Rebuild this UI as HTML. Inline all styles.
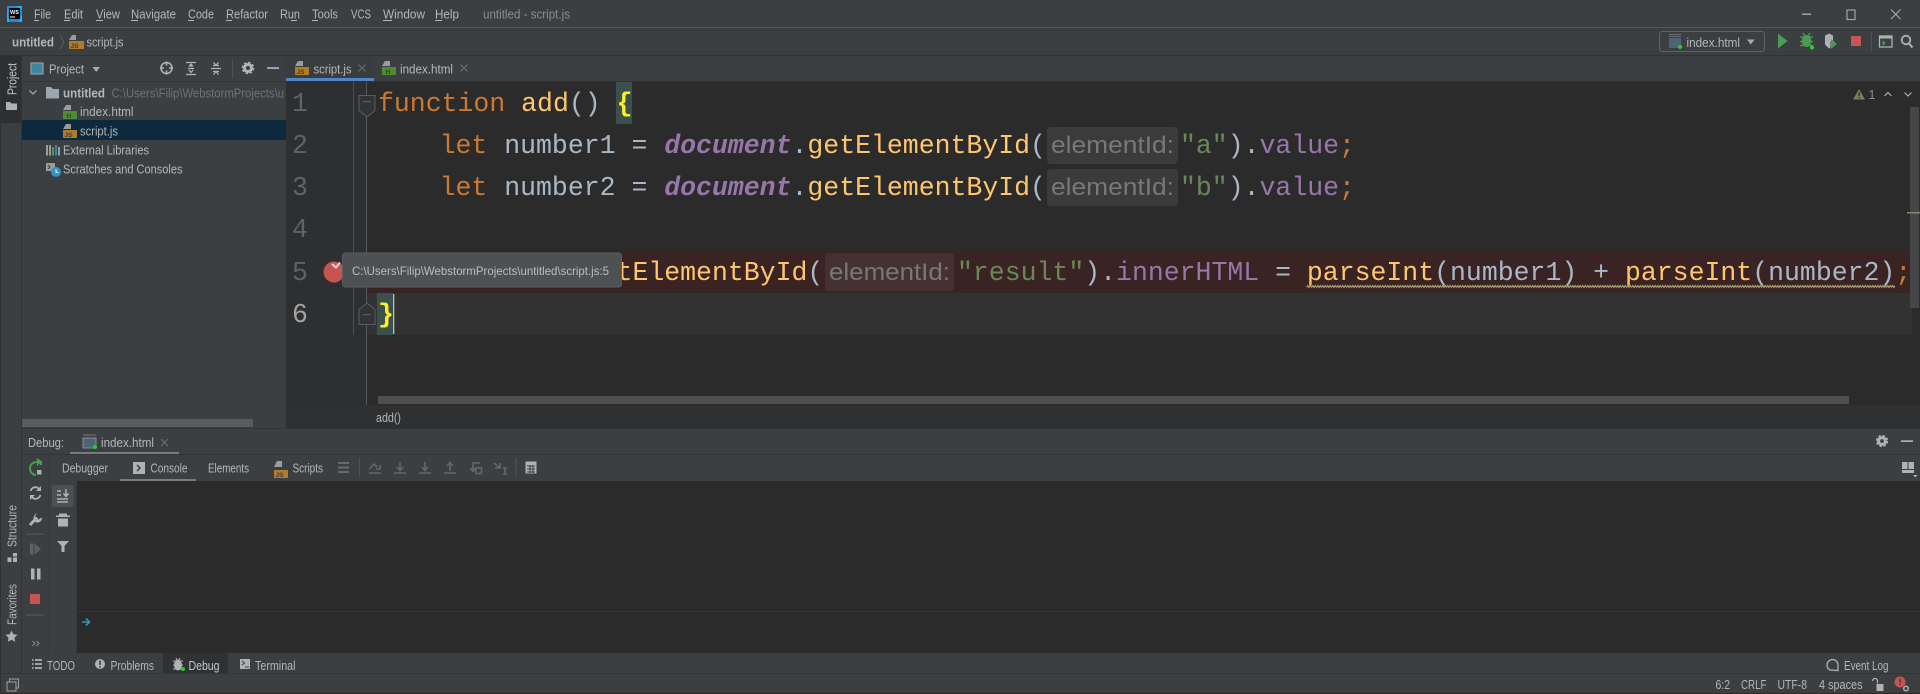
<!DOCTYPE html>
<html><head><meta charset="utf-8"><title>untitled - script.js</title>
<style>
html,body{margin:0;padding:0;background:#3c3f41;width:1920px;height:694px;overflow:hidden}
svg{display:block;filter:blur(.35px)}
text{font-family:"Liberation Sans",sans-serif;font-size:12.5px;fill:#b4b6b8;white-space:pre}
.d{fill:#8a8d8f}
.c{font-family:"Liberation Mono",monospace;font-size:26.5px}
.k{fill:#cc7832}.f{fill:#ffc66d}.v{fill:#a9b7c6}.p{fill:#9876aa}.s{fill:#6a8759}
.b{font-weight:bold;font-style:italic}
.n{fill:#606366}
.h{font-size:24px;fill:#787878}
.i{fill:none;stroke:#afb1b3;stroke-width:1.6}
.m{fill:#6e7072;stroke:#6e7072}
</style></head><body>
<svg width="1920" height="694" viewBox="0 0 1920 694" xmlns="http://www.w3.org/2000/svg">
<defs><pattern id="sq" x="1306.500" y="284" width="5" height="5" patternUnits="userSpaceOnUse"><path d="M0 3.500L1.250 1.500 2.500 3.500 3.750 1.500 5 3.500" fill="none" stroke="#b0a878" stroke-width="1"/></pattern></defs>
<!-- base -->
<rect width="1920" height="694" fill="#3c3f41"/>
<rect x="0" y="27" width="1920" height="1" fill="#555759"/>
<rect x="0" y="55" width="1920" height="1" fill="#323232"/>
<!-- logo -->
<rect x="7" y="6" width="15" height="16" fill="#07c3f2"/><path d="M7 6h8l7 3v5l-3 8H9z" fill="#1d8ce0"/><rect x="9" y="8" width="11" height="11" fill="#000"/><text x="10" y="14" style="font-size:5.5px;font-weight:bold;fill:#fff">WS</text><rect x="10" y="16.5" width="5" height="1" fill="#fff"/>
<!-- menu -->
<text x="34" y="18.500" textLength="17" lengthAdjust="spacingAndGlyphs">File</text>
<text x="64" y="18.500" textLength="19" lengthAdjust="spacingAndGlyphs">Edit</text>
<text x="96" y="18.500" textLength="24" lengthAdjust="spacingAndGlyphs">View</text>
<text x="131" y="18.500" textLength="45" lengthAdjust="spacingAndGlyphs">Navigate</text>
<text x="188" y="18.500" textLength="26" lengthAdjust="spacingAndGlyphs">Code</text>
<text x="226" y="18.500" textLength="42" lengthAdjust="spacingAndGlyphs">Refactor</text>
<text x="280" y="18.500" textLength="20" lengthAdjust="spacingAndGlyphs">Run</text>
<text x="312" y="18.500" textLength="26" lengthAdjust="spacingAndGlyphs">Tools</text>
<text x="351" y="18.500" textLength="20" lengthAdjust="spacingAndGlyphs">VCS</text>
<text x="383" y="18.500" textLength="42" lengthAdjust="spacingAndGlyphs">Window</text>
<text x="435" y="18.500" textLength="24" lengthAdjust="spacingAndGlyphs">Help</text>
<text x="483" y="18.500" textLength="87" lengthAdjust="spacingAndGlyphs" class="d">untitled - script.js</text>
<g fill="#b4b6b8"><rect x="34" y="20" width="5" height="1"/><rect x="64" y="20" width="6" height="1"/><rect x="96" y="20" width="7" height="1"/><rect x="131" y="20" width="7" height="1"/><rect x="188" y="20" width="6" height="1"/><rect x="226" y="20" width="6" height="1"/><rect x="291" y="20" width="6" height="1"/><rect x="312" y="20" width="6" height="1"/><rect x="383" y="20" width="9" height="1"/><rect x="435" y="20" width="7" height="1"/></g>
<!-- window controls -->
<rect x="1802" y="13.5" width="9" height="1.4" fill="#a8aaac"/>
<rect x="1847" y="10" width="8" height="9.5" fill="none" stroke="#a8aaac" stroke-width="1.1"/>
<path d="M1891 9.5l9.5 9.5M1900.500 9.500l-9.500 9.500" stroke="#a8aaac" stroke-width="1.1"/>
<!-- navbar -->
<text x="12" y="46.500" textLength="42" lengthAdjust="spacingAndGlyphs" style="font-weight:bold">untitled</text>
<path d="M60 35l4 7-4 7" fill="none" stroke="#5a5d5f"/>
<path d="M72 35h4v5h-7z" fill="#9a9c9e"/><rect x="69" y="41" width="15" height="8" fill="#b07c2a"/><text x="70.500" y="48" style="font-size:6.500px;font-weight:bold;fill:#3c3f41">JS</text>
<text x="86.500" y="46.500" textLength="37" lengthAdjust="spacingAndGlyphs">script.js</text>
<!-- run config -->
<rect x="1659.500" y="31.500" width="105" height="20" rx="3" fill="none" stroke="#5e6163"/>
<rect x="1669" y="38" width="12" height="10" fill="#4d6474"/><path d="M1669 34.500h12M1669 36.500h12" stroke="#6e7072"/><circle cx="1680" cy="47" r="2" fill="#1ed81e"/>
<text x="1686.500" y="47" textLength="53.500" lengthAdjust="spacingAndGlyphs">index.html</text>
<path d="M1747 39.500h7.500l-3.750 5z" fill="#a8aaac"/>
<path d="M1778 33.500l9.500 7.500-9.500 7.500z" fill="#499c54"/>
<ellipse cx="1806.500" cy="41" rx="4.800" ry="6" fill="#499c54"/><path d="M1800 37h13M1800 41.500h13M1800 45.500h13M1803 33l2 3M1810 33l-2 3" stroke="#499c54" stroke-width="1.300"/><circle cx="1812" cy="47.500" r="2" fill="#1ed81e"/>
<path d="M1825 35.500l4-2 4 2v5l-2.500 1v6l-1.500 1-4-4z" fill="#afb1b3"/><path d="M1831 39l6 5-6 5z" fill="#499c54"/>
<rect x="1851" y="36" width="10" height="10" fill="#c75450"/>
<rect x="1871" y="32" width="1" height="19" fill="#515456"/>
<rect x="1879.500" y="36" width="12.500" height="11" fill="none" stroke="#afb1b3" stroke-width="1.300"/><rect x="1879.500" y="36" width="12.500" height="2.500" fill="#afb1b3"/><path d="M1882.500 40.500l3.500 2.500-3.500 2.500z" fill="#499c54"/>
<circle cx="1906" cy="40" r="4.300" class="i" style="stroke-width:1.800"/><path d="M1909 43.500l3.500 4" class="i" style="stroke-width:2"/>
<!-- left stripe -->
<rect x="0" y="56" width="21" height="638" fill="#3c3f41"/>
<rect x="0" y="56" width="1" height="638" fill="#2f3133"/>
<rect x="1" y="56" width="20" height="67" fill="#2d2f30"/>
<rect x="21" y="56" width="1" height="617" fill="#323436"/>
<text transform="translate(16.500,95) rotate(-90)" textLength="32" lengthAdjust="spacingAndGlyphs" style="fill:#c4c6c8">Project</text>
<path d="M6 102h4l1.500 1.500H17V110H6z" fill="#afb1b3"/>
<text transform="translate(16.500,547) rotate(-90)" textLength="42" lengthAdjust="spacingAndGlyphs">Structure</text>
<path d="M7.500 557.500h4v4.500h-4zM13 557.500h4v4.500h-4zM13 553h4v3.500h-4z" fill="#afb1b3"/>
<text transform="translate(16.500,625) rotate(-90)" textLength="41" lengthAdjust="spacingAndGlyphs">Favorites</text>
<path d="M11.500 630.500l1.800 3.700 4.200.6-3 2.900.7 4.100-3.700-2-3.700 2 .7-4.100-3-2.900 4.200-.6z" fill="#afb1b3"/>
<!-- project panel -->
<rect x="22" y="56" width="264" height="25" fill="#3c3f41"/>
<rect x="22" y="81" width="264" height="1" fill="#323436"/>
<rect x="31" y="63" width="12" height="11" fill="#3e86a0" stroke="#9a9c9e" stroke-width="1.200"/>
<text x="49" y="73.500" textLength="35" lengthAdjust="spacingAndGlyphs">Project</text>
<path d="M92.500 67h7.500l-3.750 5z" fill="#a8aaac"/>
<circle cx="166.500" cy="68" r="5.500" class="i"/><path d="M166.500 61.500v4M166.500 70.500v4M160 68h4M169 68h4" class="i"/>
<path d="M186 62.500h10M186 74.500h10M191 64v3M189 66.500l2-2.500 2 2.500M189 70l2 2.500 2-2.500M188 68.500h6" class="i" style="stroke-width:1.300"/>
<path d="M211 68.500h10M213.500 62.500l2.500 3 2.500-3M213.500 74.500l2.500-3 2.500 3" class="i" style="stroke-width:1.300"/><path d="M213 65.500h6M213 71.500h6" stroke="#afb1b3" stroke-width="1.300"/>
<rect x="232" y="59" width="1" height="19" fill="#515456"/>
<circle cx="248" cy="68" r="3.500" fill="none" stroke="#afb1b3" stroke-width="3"/><circle cx="248" cy="68" r="5.500" fill="none" stroke="#afb1b3" stroke-width="1.500" stroke-dasharray="2.500 1.800"/>
<rect x="267" y="67.200" width="12" height="1.700" fill="#afb1b3"/>
<rect x="22" y="120" width="264" height="20" fill="#0d293e"/>
<path d="M29.500 90.500l3.500 3.500 3.500-3.500" fill="none" stroke="#a0a2a4" stroke-width="1.300"/>
<path d="M46 87h5l2 2h6v9.500H46z" fill="#9aa7b0"/>
<text x="63" y="97.500" textLength="42" lengthAdjust="spacingAndGlyphs" style="font-weight:bold">untitled</text>
<text x="111.500" y="97.500" textLength="172.500" lengthAdjust="spacingAndGlyphs" style="fill:#6f7274">C:\Users\Filip\WebstormProjects\u</text>
<path d="M66 105h5v5h-8z" fill="#9a9c9e"/><rect x="63" y="111" width="14" height="8" fill="#4f8a34"/><text x="66.500" y="118" style="font-size:6.500px;font-weight:bold;fill:#2d4a20">H</text>
<text x="80" y="116" textLength="53.500" lengthAdjust="spacingAndGlyphs">index.html</text>
<path d="M66 124h5v5h-8z" fill="#9a9c9e"/><rect x="63" y="130" width="14" height="8" fill="#b07c2a"/><text x="64.500" y="137" style="font-size:6.500px;font-weight:bold;fill:#3c3f41">JS</text>
<text x="80" y="135.500" textLength="38" lengthAdjust="spacingAndGlyphs">script.js</text>
<g stroke-width="2"><path d="M47 145v10.500" stroke="#9a9c9e"/><path d="M50 145v10.500" stroke="#9a9c9e"/><path d="M53 147v8.500" stroke="#4f9a44"/><path d="M56 145v10.500" stroke="#3e86a0"/><path d="M59 147v8.500" stroke="#9a9c9e"/></g>
<text x="63" y="154.500" textLength="86" lengthAdjust="spacingAndGlyphs">External Libraries</text>
<rect x="46" y="163" width="9" height="8" fill="#9a9c9e"/><path d="M48 165l2 2-2 2" fill="none" stroke="#3c3f41"/><circle cx="56" cy="172" r="5" fill="#3592c4"/><path d="M56 169v3.300h2.500" fill="none" stroke="#fff" stroke-width=".9"/>
<text x="63" y="173.500" textLength="119.500" lengthAdjust="spacingAndGlyphs">Scratches and Consoles</text>
<rect x="22" y="419" width="231" height="8" fill="#595b5d"/>
<!-- tabs -->
<rect x="286" y="56" width="1634" height="25" fill="#3c3f41"/>
<rect x="286" y="56" width="88" height="25" fill="#3a3d3f"/>
<rect x="286" y="78" width="88" height="3" fill="#4a88c7"/>
<rect x="286" y="81" width="1634" height="1" fill="#323232"/>
<path d="M298 61h5v5h-8z" fill="#9a9c9e"/><rect x="295" y="67" width="14" height="8" fill="#b07c2a"/><text x="296.500" y="74" style="font-size:6.500px;font-weight:bold;fill:#3c3f41">JS</text>
<text x="313.500" y="73.500" textLength="38" lengthAdjust="spacingAndGlyphs">script.js</text>
<path d="M358.500 64.500l7 7M365.500 64.500l-7 7" stroke="#6e7072"/>
<path d="M385 61h5v5h-8z" fill="#9a9c9e"/><rect x="382" y="67" width="14" height="8" fill="#4f8a34"/><text x="385.500" y="74" style="font-size:6.500px;font-weight:bold;fill:#2d4a20">H</text>
<text x="400" y="73.500" textLength="53" lengthAdjust="spacingAndGlyphs">index.html</text>
<path d="M460.500 64.500l7 7M467.500 64.500l-7 7" stroke="#6e7072"/>
<!-- editor -->
<rect x="286" y="82" width="1634" height="323" fill="#2b2b2b"/>
<rect x="286" y="82" width="80" height="323" fill="#2e2f30"/>
<rect x="366" y="293" width="1546" height="42" fill="#323232"/>
<rect x="366" y="251" width="1546" height="42" fill="#3a2323"/>
<rect x="353" y="82" width="1" height="253" fill="#41564f"/>
<rect x="366" y="82" width="1" height="323" fill="#555759"/>
<rect x="1910" y="107" width="9" height="201" fill="#444648"/>
<rect x="1907" y="212" width="13" height="1.500" fill="#8c8567"/>
<!-- brace bg -->
<rect x="616" y="82" width="16" height="42" fill="#3b514d"/>
<rect x="377" y="293" width="16" height="42" fill="#3b514d"/>
<!-- gutter numbers -->
<text class="c n" x="292" y="111">1</text>
<text class="c n" x="292" y="153">2</text>
<text class="c n" x="292" y="195">3</text>
<text class="c n" x="292" y="237">4</text>
<text class="c n" x="292" y="280">5</text>
<text class="c" x="292" y="322" style="fill:#a4a3a3">6</text>
<!-- fold -->
<path d="M359 95.500h16v15l-8 6.500-8-6.500z" fill="#313335" stroke="#5a5d5f"/><rect x="363" y="101" width="8" height="1.300" fill="#5a5d5f"/>
<path d="M359 324.500h16v-15l-8-6.500-8 6.500z" fill="#313335" stroke="#5a5d5f"/><rect x="363" y="314" width="8" height="1.300" fill="#5a5d5f"/>
<!-- code -->
<text class="c" x="378" y="111"><tspan class="k">function</tspan> <tspan class="f">add</tspan><tspan class="v">()</tspan> <tspan style="fill:#ffef28;font-weight:bold">{</tspan></text>
<text class="c" x="439.600" y="153"><tspan class="k">let</tspan> <tspan class="v" dx="1">number1 =</tspan> <tspan class="p b" dx="1">document</tspan><tspan class="v">.</tspan><tspan class="f">getElementById</tspan><tspan class="v">(</tspan></text>
<rect x="1047" y="127" width="131" height="37" rx="4" fill="#3b3b3b"/>
<text class="h" x="1051" y="153" textLength="123" lengthAdjust="spacingAndGlyphs">elementId:</text>
<text class="c" x="1180" y="153"><tspan class="s">"a"</tspan><tspan class="v">).</tspan><tspan class="p">value</tspan><tspan class="k">;</tspan></text>
<text class="c" x="439.600" y="195"><tspan class="k">let</tspan> <tspan class="v" dx="1">number2 =</tspan> <tspan class="p b" dx="1">document</tspan><tspan class="v">.</tspan><tspan class="f">getElementById</tspan><tspan class="v">(</tspan></text>
<rect x="1047" y="169" width="131" height="37" rx="4" fill="#3b3b3b"/>
<text class="h" x="1051" y="195" textLength="123" lengthAdjust="spacingAndGlyphs">elementId:</text>
<text class="c" x="1180" y="195"><tspan class="s">"b"</tspan><tspan class="v">).</tspan><tspan class="p">value</tspan><tspan class="k">;</tspan></text>
<text class="c" x="441.600" y="280"><tspan class="p b">document</tspan><tspan class="v">.</tspan><tspan class="f">getElementById</tspan><tspan class="v">(</tspan></text>
<rect x="825" y="253" width="129" height="38" rx="4" fill="#453131"/>
<text class="h" x="829" y="280" textLength="121" lengthAdjust="spacingAndGlyphs">elementId:</text>
<text class="c" x="957" y="280"><tspan class="s">"result"</tspan><tspan class="v">).</tspan><tspan class="p">innerHTML</tspan> <tspan class="v">=</tspan> <tspan class="f">parseInt</tspan><tspan class="v">(number1) +</tspan> <tspan class="f">parseInt</tspan><tspan class="v">(number2)</tspan><tspan class="k">;</tspan></text>
<rect x="1306.500" y="284" width="588.500" height="5" fill="url(#sq)"/>
<text class="c" x="378" y="322" style="fill:#ffef28;font-weight:bold">}</text>
<rect x="393" y="294" width="1.300" height="40" fill="#bbbbbb"/>
<!-- breakpoint + tooltip -->
<circle cx="334" cy="272" r="10.500" fill="#c75450"/><path d="M332 264l4 3.500 4-5" fill="none" stroke="#d8d8d8" stroke-width="2"/>
<rect x="342.500" y="253" width="279" height="34" rx="3" fill="#4e5153" stroke="#5a5d5f"/>
<text x="352" y="275" textLength="257" lengthAdjust="spacingAndGlyphs" style="fill:#bbbdbf;font-size:12px">C:\Users\Filip\WebstormProjects\untitled\script.js:5</text>
<!-- warning -->
<path d="M1859 89l6 10.500h-12z" fill="#807a5e"/><rect x="1858.400" y="92.500" width="1.300" height="3.500" fill="#2b2b2b"/><rect x="1858.400" y="97" width="1.300" height="1.300" fill="#2b2b2b"/>
<text x="1868.500" y="99" style="fill:#8a8d8f">1</text>
<path d="M1884.500 96l3.500-3.500 3.500 3.500M1904.500 92.500l3.500 3.500 3.500-3.500" fill="none" stroke="#a8aaac" stroke-width="1.200"/>
<!-- h scrollbar -->
<rect x="378" y="396" width="1471" height="8" fill="#4f4f4f"/>
<!-- breadcrumbs -->
<rect x="286" y="405" width="1634" height="24" fill="#2f3031"/>
<text x="376" y="422" textLength="25" lengthAdjust="spacingAndGlyphs">add()</text>
<rect x="21" y="428" width="1899" height="1" fill="#323436"/>
<!-- debug header -->
<text x="28" y="447" textLength="36" lengthAdjust="spacingAndGlyphs">Debug:</text>
<path d="M83 435h13" stroke="#7a7c7e"/><rect x="83" y="438" width="13" height="10" fill="#4d6474" stroke="#8a8d8f"/><circle cx="95" cy="447" r="2" fill="#1ed81e"/>
<text x="101" y="447" textLength="53" lengthAdjust="spacingAndGlyphs">index.html</text>
<path d="M161 439l7 7M168 439l-7 7" stroke="#6e7072"/>
<rect x="70" y="452" width="109" height="2" fill="#787c7e"/>
<rect x="21" y="454" width="1899" height="1" fill="#323436"/>
<circle cx="1882" cy="441" r="3.400" fill="none" stroke="#afb1b3" stroke-width="3"/><circle cx="1882" cy="441" r="5.400" fill="none" stroke="#afb1b3" stroke-width="1.500" stroke-dasharray="2.500 1.800"/>
<rect x="1901" y="440.300" width="12" height="1.700" fill="#afb1b3"/>
<!-- debug toolbar -->
<rect x="21" y="455" width="1" height="218" fill="#323436"/>
<rect x="48.500" y="455" width="1" height="198" fill="#323436"/>
<text x="62" y="472.500" textLength="46" lengthAdjust="spacingAndGlyphs">Debugger</text>
<rect x="133" y="462" width="12" height="12" fill="#afb1b3"/><path d="M137 465l3 3-3 3" fill="none" stroke="#3c3f41" stroke-width="1.500"/>
<text x="150.500" y="472.500" textLength="37" lengthAdjust="spacingAndGlyphs">Console</text>
<rect x="120" y="479" width="76" height="2" fill="#787c7e"/>
<text x="208" y="472.500" textLength="41" lengthAdjust="spacingAndGlyphs">Elements</text>
<path d="M277 461h5v6h-8z" fill="#9a9c9e"/><rect x="274" y="470" width="14" height="8" fill="#b07c2a"/><text x="275.500" y="477" style="font-size:6.500px;font-weight:bold;fill:#3c3f41">JS</text>
<text x="292.500" y="472.500" textLength="30.500" lengthAdjust="spacingAndGlyphs">Scripts</text>
<path d="M338 463h11M338 467.500h11M338 472h11" stroke="#686a6c" stroke-width="2"/>
<rect x="359" y="458" width="1" height="19" fill="#515456"/>
<g fill="none" stroke="#646668" stroke-width="1.600">
<path d="M369 473h12M369.500 469l4.500-5 3 3M376 469h4v-4"/>
<path d="M394 473h12M400 462v8M397 467l3 3.500 3-3.500"/>
<path d="M419 473h12M425 462v8M422 467l3 3.500 3-3.500"/>
<path d="M444 473h12M450 471v-8M447 466l3-3.500 3 3.500"/>
<path d="M480 463h-7v8M470 468l3 3.500 3-3.500"/><rect x="476" y="468" width="5.500" height="5.500"/>
<path d="M494 463l6 5M495 468h5v-5M503 468h4M505 468v6M503 474h4"/>
</g>
<rect x="515.500" y="458" width="1" height="19" fill="#515456"/>
<rect x="525.500" y="461.500" width="11" height="12" fill="#afb1b3"/><path d="M527 466h8M527 469h8M527 472h8M530 465v8M533 465v8" stroke="#3c3f41"/>
<g fill="#afb1b3"><rect x="1902" y="462" width="5.500" height="7"/><rect x="1908.500" y="462" width="5.500" height="7"/><rect x="1902" y="470" width="12" height="3"/><path d="M1913 475h4.500l-2.250 2.500z"/></g>
<!-- debug sidebars -->
<rect x="49" y="481" width="28" height="172" fill="#3c3f41"/>
<rect x="76.500" y="481" width="1" height="172" fill="#323436"/>
<path d="M41 465v-3l-4-3M41 462h-4c-4 0-7 2.500-7 6.500s3 6.500 6 6.500" fill="none" stroke="#499c54" stroke-width="2"/><path d="M37 458l4.500 4-4.500 4z" fill="#499c54"/><rect x="37" y="470" width="4.500" height="4.500" fill="#afb1b3"/>
<path d="M30.500 491c1-3 4-4.500 6.500-3.500l2 1M40.500 495c-1 3-4 4.500-6.500 3.500l-2-1" fill="none" stroke="#afb1b3" stroke-width="1.800"/><path d="M41 486v5h-5zM30 500v-5h5z" fill="#afb1b3"/>
<path d="M30 525l7-7.500" stroke="#afb1b3" stroke-width="3"/><path d="M37 513l-2 3 .5 3 3 .5 3-2 .5 1c-.5 3-3 4.500-6 4l-2.500-3c0-3 1-5.500 3.500-6.500z" fill="#afb1b3"/>
<rect x="26" y="533.500" width="18" height="1.300" fill="#515456"/>
<rect x="30" y="543.500" width="3.500" height="11" fill="#5e6062"/><path d="M34.500 543.500l6.500 5.500-6.500 5.500z" fill="#5e6062"/>
<rect x="31" y="568.500" width="3.500" height="11" fill="#afb1b3"/><rect x="37" y="568.500" width="3.500" height="11" fill="#afb1b3"/>
<rect x="30" y="594" width="10" height="10" fill="#c75450"/>
<rect x="26" y="614.500" width="18" height="1.300" fill="#515456"/>
<path d="M32.500 641l2.500 2.500-2.500 2.500M36.500 641l2.500 2.500-2.500 2.500" fill="none" stroke="#8a8d8f"/>
<rect x="52" y="485" width="21.500" height="22" rx="2" fill="#4c5052"/>
<path d="M57 491h4M57 495h4M57 499h11M66 489v7M63.500 493.500l2.500 3 2.500-3M57 502h11" fill="none" stroke="#afb1b3" stroke-width="1.500"/>
<path d="M59 513.500h8v2h3v1.500H56v-1.500h3zM58 518.500h10v8H58z" fill="#afb1b3"/>
<path d="M57 541h12l-4.500 5v6h-3v-6z" fill="#afb1b3"/>
<!-- console -->
<rect x="77" y="481" width="1843" height="172" fill="#2b2b2b"/>
<rect x="77" y="611" width="1843" height="1" fill="#353535"/>
<path d="M82 622h7M86 618.500l3.500 3.500-3.500 3.500" fill="none" stroke="#3592c4" stroke-width="1.600"/>
<!-- bottom tabs -->
<rect x="22" y="653" width="1898" height="20" fill="#3c3f41"/>
<rect x="0" y="673" width="1920" height="1" fill="#323436"/>
<rect x="163" y="653" width="65" height="20" fill="#2f3133"/>
<path d="M35 660h7M35 664h7M35 668h7M32 660h1.500M32 664h1.500M32 668h1.500" stroke="#afb1b3" stroke-width="1.800"/>
<text x="47" y="670" textLength="28" lengthAdjust="spacingAndGlyphs">TODO</text>
<circle cx="100" cy="664" r="5" fill="#afb1b3"/><rect x="99.200" y="660.500" width="1.600" height="4.500" fill="#3c3f41"/><rect x="99.200" y="666" width="1.600" height="1.600" fill="#3c3f41"/>
<text x="110.500" y="670" textLength="43.500" lengthAdjust="spacingAndGlyphs">Problems</text>
<ellipse cx="178" cy="665" rx="4" ry="5.500" fill="#afb1b3"/><path d="M173 661h10M173 665h10M173 669h10M176 658l1 2M180 658l-1 2" stroke="#afb1b3"/><circle cx="183" cy="669" r="2" fill="#1ed81e"/>
<text x="188.500" y="670" textLength="31" lengthAdjust="spacingAndGlyphs" style="fill:#c4c6c8">Debug</text>
<rect x="240" y="659" width="10" height="10" fill="#afb1b3"/><path d="M242 661l2.500 2-2.500 2M245 667h4" fill="none" stroke="#3c3f41"/>
<text x="255" y="670" textLength="40.500" lengthAdjust="spacingAndGlyphs">Terminal</text>
<path d="M1830 670c-2-1-3-3-3-5 0-3 2.500-5.500 5.500-5.500s5.500 2.500 5.500 5.500v5.500z" fill="none" stroke="#afb1b3" stroke-width="1.300"/>
<text x="1844" y="670" textLength="44.500" lengthAdjust="spacingAndGlyphs">Event Log</text>
<!-- status bar -->
<rect x="7" y="682" width="9" height="9" fill="none" stroke="#a0a2a4"/><path d="M9.500 682v-3h9v9h-2.500" fill="none" stroke="#a0a2a4"/>
<text x="1715.500" y="689" textLength="14.500" lengthAdjust="spacingAndGlyphs">6:2</text>
<text x="1741" y="689" textLength="25.500" lengthAdjust="spacingAndGlyphs">CRLF</text>
<text x="1777.500" y="689" textLength="29.500" lengthAdjust="spacingAndGlyphs">UTF-8</text>
<text x="1819" y="689" textLength="43.500" lengthAdjust="spacingAndGlyphs">4 spaces</text>
<rect x="1876.500" y="684" width="7" height="7" fill="#afb1b3"/><path d="M1877.500 683.500v-2.500a2.500 2.500 0 0 0-5 0" fill="none" stroke="#afb1b3" stroke-width="1.200"/>
<circle cx="1900" cy="682" r="5.500" fill="#c75450"/><rect x="1899.300" y="678.500" width="1.500" height="4" fill="#3c3f41"/><rect x="1899.300" y="683.500" width="1.500" height="1.500" fill="#3c3f41"/><circle cx="1906" cy="688.500" r="2.300" fill="none" stroke="#afb1b3" stroke-width="1.500"/>
<rect x="0" y="693" width="1920" height="1" fill="#2b2b2b"/>
</svg>
</body></html>
